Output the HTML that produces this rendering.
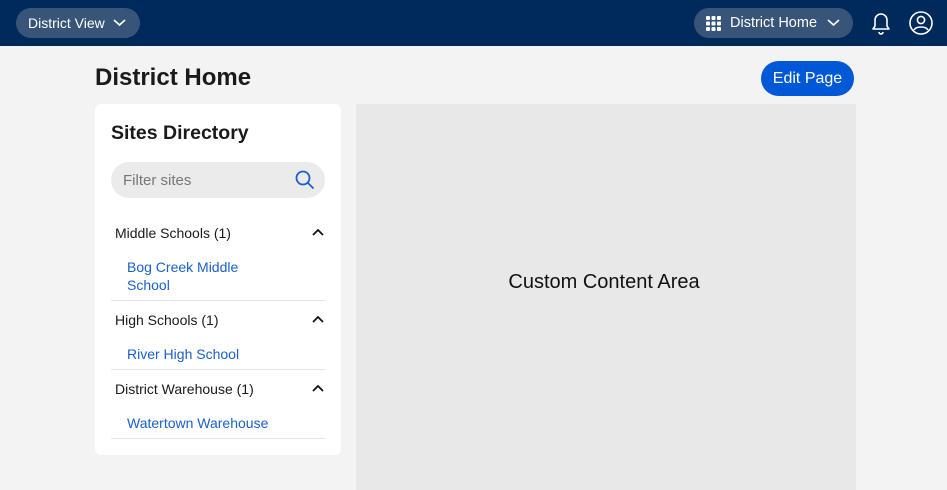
<!DOCTYPE html>
<html><head><style>
*{margin:0;padding:0;box-sizing:border-box}
body{width:947px;height:490px;background:#f3f3f3;font-family:"Liberation Sans",sans-serif;position:relative;overflow:hidden;color:#1a1a1a}
.top{position:absolute;left:0;top:0;width:947px;height:46px;background:#002a5c}
.pill{position:absolute;height:30px;border-radius:15px;background:#385479;color:#fff;font-size:14px;line-height:30px}
.a{position:absolute}
.card{position:absolute;left:95px;top:104px;width:246px;height:351px;background:#fff;border-radius:6px}
.grp{position:absolute;left:115px;font-size:14px}
.lnk{position:absolute;left:127px;font-size:14px;color:#1a5fcc;line-height:18px}
.hr{position:absolute;left:111px;width:214px;height:1px;background:#e4e4e4}
.car{position:absolute;left:312px}
</style></head><body>
<div class="top"></div>
<div class="pill" style="left:16px;top:8px;width:124px;padding-left:12px">District View
<svg class="a" style="left:97px;top:10px" width="13" height="9" viewBox="0 0 13 9"><path d="M1 2l5.5 5L12 2" stroke="#fff" stroke-width="1.6" fill="none"/></svg></div>
<div class="pill" style="left:694px;top:8px;width:159px;padding-left:36px;font-size:14.5px">District Home
<svg class="a" style="left:12px;top:8px" width="15" height="15"><g fill="#fff"><rect x="0" y="0" width="4" height="4" rx="1"/><rect x="5.5" y="0" width="4" height="4" rx="1"/><rect x="11" y="0" width="4" height="4" rx="1"/><rect x="0" y="5.5" width="4" height="4" rx="1"/><rect x="5.5" y="5.5" width="4" height="4" rx="1"/><rect x="11" y="5.5" width="4" height="4" rx="1"/><rect x="0" y="11" width="4" height="4" rx="1"/><rect x="5.5" y="11" width="4" height="4" rx="1"/><rect x="11" y="11" width="4" height="4" rx="1"/></g></svg>
<svg class="a" style="left:133px;top:10px" width="13" height="9" viewBox="0 0 13 9"><path d="M1 2l5.5 5L12 2" stroke="#fff" stroke-width="1.6" fill="none"/></svg></div>
<svg class="a" style="left:868px;top:10px" width="26" height="26" viewBox="0 0 26 26"><path d="M5 19h16l-2-3v-6a6 6 0 0 0-12 0v6z M11 22a2 2 0 0 0 4 0" stroke="#fff" stroke-width="1.6" fill="none" stroke-linejoin="round"/></svg>
<svg class="a" style="left:908px;top:10px" width="26" height="26" viewBox="0 0 26 26"><circle cx="13" cy="13" r="11" stroke="#fff" stroke-width="1.6" fill="none"/><circle cx="13" cy="10" r="3.6" stroke="#fff" stroke-width="1.6" fill="none"/><path d="M6 20c2-4 12-4 14 0" stroke="#fff" stroke-width="1.6" fill="none"/></svg>
<div class="a" style="left:95px;top:64px;font-size:24px;font-weight:bold">District Home</div>
<div class="a" style="left:761px;top:61px;width:93px;height:35px;border-radius:18px;background:#0058d6;color:#fff;font-size:16px;line-height:35px;text-align:center">Edit Page</div>
<div class="card"></div>
<div class="a" style="left:111px;top:122px;font-size:19.5px;font-weight:bold">Sites Directory</div>
<div class="a" style="left:111px;top:162px;width:214px;height:36px;border-radius:18px;background:#ebebeb;color:#777;font-size:15px;line-height:38px;padding-left:12px">Filter sites</div>
<svg class="a" style="left:294px;top:169px" width="22" height="22" viewBox="0 0 22 22"><circle cx="9" cy="9" r="6.5" stroke="#1a5fcc" stroke-width="1.8" fill="none"/><path d="M14 14l5.5 5.5" stroke="#1a5fcc" stroke-width="1.8"/></svg>
<div class="grp" style="top:225px">Middle Schools (1)</div>
<div class="lnk" style="top:258px">Bog Creek Middle<br>School</div>
<div class="hr" style="top:300px"></div>
<div class="grp" style="top:312px">High Schools (1)</div>
<div class="lnk" style="top:345px">River High School</div>
<div class="hr" style="top:369px"></div>
<div class="grp" style="top:381px">District Warehouse (1)</div>
<div class="lnk" style="top:414px">Watertown Warehouse</div>
<div class="hr" style="top:438px"></div>
<svg class="car" style="top:228px" width="12" height="10"><path d="M1 7l5-5 5 5" stroke="#111" stroke-width="1.8" fill="none"/></svg>
<svg class="car" style="top:315px" width="12" height="10"><path d="M1 7l5-5 5 5" stroke="#111" stroke-width="1.8" fill="none"/></svg>
<svg class="car" style="top:384px" width="12" height="10"><path d="M1 7l5-5 5 5" stroke="#111" stroke-width="1.8" fill="none"/></svg>
<div class="a" style="left:356px;top:104px;width:500px;height:386px;background:#e8e8e8;text-align:center;line-height:356px;font-size:20px;color:#111;padding-right:4px">Custom Content Area</div>
</body></html>
